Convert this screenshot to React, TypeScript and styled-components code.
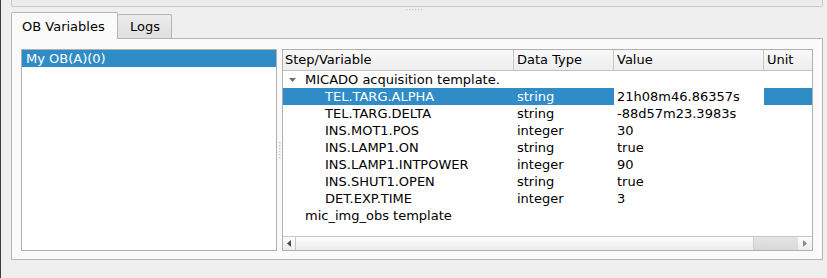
import React from 'react';
import styled, { createGlobalStyle } from 'styled-components';

const GlobalStyle = createGlobalStyle`
  html, body {
    margin: 0;
    padding: 0;
    background: #efefef;
  }
  body {
    font-family: 'DejaVu Sans', 'Liberation Sans', sans-serif;
    font-size: 13px;
    color: #000;
  }
`;

type Row = {
  name: string;
  type?: string;
  value?: string;
  level: 0 | 1;
  expanded?: boolean;
  selected?: boolean;
};

const rows: Row[] = [
  { name: 'MICADO acquisition template.', level: 0, expanded: true },
  { name: 'TEL.TARG.ALPHA', type: 'string', value: '21h08m46.86357s', level: 1, selected: true },
  { name: 'TEL.TARG.DELTA', type: 'string', value: '-88d57m23.3983s', level: 1 },
  { name: 'INS.MOT1.POS', type: 'integer', value: '30', level: 1 },
  { name: 'INS.LAMP1.ON', type: 'string', value: 'true', level: 1 },
  { name: 'INS.LAMP1.INTPOWER', type: 'integer', value: '90', level: 1 },
  { name: 'INS.SHUT1.OPEN', type: 'string', value: 'true', level: 1 },
  { name: 'DET.EXP.TIME', type: 'integer', value: '3', level: 1 },
  { name: 'mic_img_obs template', level: 0 },
];

const columns = [
  { title: 'Step/Variable', width: 231 },
  { title: 'Data Type', width: 100 },
  { title: 'Value', width: 150 },
  { title: 'Unit', width: 48 },
];

export default function App() {
  return (
    <>
      <GlobalStyle />
      <Window>
        <EdgeStrip />
        <Main>
          <TopPanel />
          <SplitHandle $vertical={false}>
            {Array.from({ length: 6 }).map((_, i) => (
              <Dot key={i} />
            ))}
          </SplitHandle>
          <TabBar>
            <Tab $active>OB Variables</Tab>
            <Tab $active={false}>Logs</Tab>
          </TabBar>
          <Pane>
            <ListBox>
              <ListItem $selected>My OB(A)(0)</ListItem>
            </ListBox>
            <SplitHandle $vertical>
              {Array.from({ length: 6 }).map((_, i) => (
                <Dot key={i} />
              ))}
            </SplitHandle>
            <Tree>
              <Header>
                {columns.map((c) => (
                  <HeaderCell key={c.title} style={{ width: c.width }}>
                    {c.title}
                  </HeaderCell>
                ))}
              </Header>
              <Body>
                {rows.map((r) => (
                  <TreeRow key={r.name}>
                    <Cell style={{ width: columns[0].width }} $selected={!!r.selected}>
                      <Indent $level={r.level}>
                        {r.expanded && (
                          <Twisty width="7" height="4" viewBox="0 0 7 4">
                            <polygon points="0,0 7,0 3.5,4" fill="#6f6f6f" />
                          </Twisty>
                        )}
                      </Indent>
                      {r.name}
                    </Cell>
                    <Cell style={{ width: columns[1].width }} $selected={!!r.selected}>
                      {r.type}
                    </Cell>
                    <Cell style={{ width: columns[2].width }} $selected={false}>
                      {r.value}
                    </Cell>
                    <Cell style={{ width: columns[3].width }} $selected={!!r.selected} />
                  </TreeRow>
                ))}
              </Body>
              <HScroll>
                <ScrollButton $side="left">
                  <svg width="4" height="7" viewBox="0 0 4 7">
                    <polygon points="4,0 4,7 0,3.5" fill="#4d4d4d" />
                  </svg>
                </ScrollButton>
                <Track>
                  <Thumb />
                </Track>
                <ScrollButton $side="right">
                  <svg width="4" height="7" viewBox="0 0 4 7">
                    <polygon points="0,0 0,7 4,3.5" fill="#8a8a8a" />
                  </svg>
                </ScrollButton>
              </HScroll>
            </Tree>
          </Pane>
        </Main>
      </Window>
    </>
  );
}

const Window = styled.div`
  display: flex;
  width: 827px;
  height: 278px;
  background: #efefef;
  overflow: hidden;
`;

const EdgeStrip = styled.div`
  width: 1px;
  flex: none;
  background: #3d3d3d;
`;

const Main = styled.div`
  display: flex;
  flex-direction: column;
  width: 812px;
  padding-left: 10px;
`;

const TopPanel = styled.div`
  height: 6px;
  background: #ececec;
  border: 1px solid #c9c9c9;
  border-top: none;
  border-radius: 0 0 2px 2px;
`;

const SplitHandle = styled.div<{ $vertical: boolean }>`
  display: flex;
  flex: none;
  align-items: center;
  justify-content: center;
  ${({ $vertical }) =>
    $vertical
      ? `
  flex-direction: column;
  width: 5px;
  gap: 1px;
  `
      : `
  height: 5px;
  gap: 1px;
  padding-right: 5px;
  `}
`;

const Dot = styled.span`
  width: 2px;
  height: 2px;
  background: #c4c4c4;
  box-shadow: inset -1px -1px 0 #e8e8e8;
`;

const TabBar = styled.div`
  display: flex;
  align-items: flex-end;
  height: 26px;
  position: relative;
  z-index: 1;
`;

const Tab = styled.div<{ $active: boolean }>`
  display: flex;
  align-items: center;
  box-sizing: border-box;
  border: 1px solid #b6b6b6;
  border-radius: 2px 2px 0 0;
  white-space: nowrap;
  ${({ $active }) =>
    $active
      ? `
  height: 27px;
  margin-bottom: -1px;
  padding: 0 0 0 10px;
  width: 107px;
  border-bottom: none;
  background: #fafafa;
  `
      : `
  height: 24px;
  width: 54px;
  padding: 0 0 0 12px;
  border-left: none;
  border-bottom: none;
  background: linear-gradient(#ebebeb, #e0e0e0);
  `}
`;

const Pane = styled.div`
  display: flex;
  height: 202px;
  padding: 10px 9px 8px 9px;
  border: 1px solid #b6b6b6;
  background: #fafafa;
`;

const ListBox = styled.div`
  width: 254px;
  flex: none;
  border: 1px solid #b0b0b0;
  background: #fff;
`;

const ListItem = styled.div<{ $selected: boolean }>`
  height: 17px;
  line-height: 17px;
  padding-left: 4px;
  color: ${({ $selected }) => ($selected ? '#fff' : '#000')};
  background: ${({ $selected }) => ($selected ? '#308cc6' : 'transparent')};
`;

const Tree = styled.div`
  display: flex;
  flex-direction: column;
  width: 529px;
  flex: none;
  border: 1px solid #b0b0b0;
  background: #fff;
`;

const Header = styled.div`
  display: flex;
  height: 20px;
  flex: none;
  border-bottom: 1px solid #c2c2c2;
  background: linear-gradient(#f9f9f9, #ededed);
`;

const HeaderCell = styled.div`
  box-sizing: border-box;
  padding-left: 3px;
  line-height: 20px;
  border-right: 1px solid #c6c6c6;
  white-space: nowrap;
  overflow: hidden;
  &:first-child {
    padding-left: 2px;
  }
  &:last-child {
    border-right: none;
  }
`;

const Body = styled.div`
  flex: 1;
`;

const TreeRow = styled.div`
  display: flex;
  height: 17px;
`;

const Cell = styled.div<{ $selected: boolean }>`
  display: flex;
  align-items: center;
  box-sizing: border-box;
  padding-left: 3px;
  white-space: nowrap;
  overflow: hidden;
  color: ${({ $selected }) => ($selected ? '#fff' : '#000')};
  background: ${({ $selected }) => ($selected ? '#308cc6' : 'transparent')};
  &:first-child {
    padding-left: 0;
  }
`;

const Indent = styled.span<{ $level: number }>`
  display: flex;
  align-items: center;
  justify-content: center;
  flex: none;
  width: ${({ $level }) => ($level === 0 ? 22 : 42)}px;
  padding-right: ${({ $level }) => ($level === 0 ? 0 : 20)}px;
  box-sizing: border-box;
`;

const Twisty = styled.svg`
  display: block;
  margin-left: -4px;
`;

const HScroll = styled.div`
  display: flex;
  height: 13px;
  flex: none;
  border-top: 1px solid #c8c8c8;
  background: linear-gradient(#fdfdfd, #ececec);
`;

const ScrollButton = styled.div<{ $side: 'left' | 'right' }>`
  display: flex;
  align-items: center;
  justify-content: center;
  width: ${({ $side }) => ($side === 'left' ? 12 : 14)}px;
  flex: none;
  ${({ $side }) => ($side === 'left' ? 'border-right: 1px solid #c8c8c8;' : '')}
`;

const Track = styled.div`
  flex: 1;
  display: flex;
  justify-content: flex-end;
`;

const Thumb = styled.div`
  width: 44px;
  background: linear-gradient(#e4e4e4, #d9d9d9);
  border-left: 1px solid #cfcfcf;
`;
